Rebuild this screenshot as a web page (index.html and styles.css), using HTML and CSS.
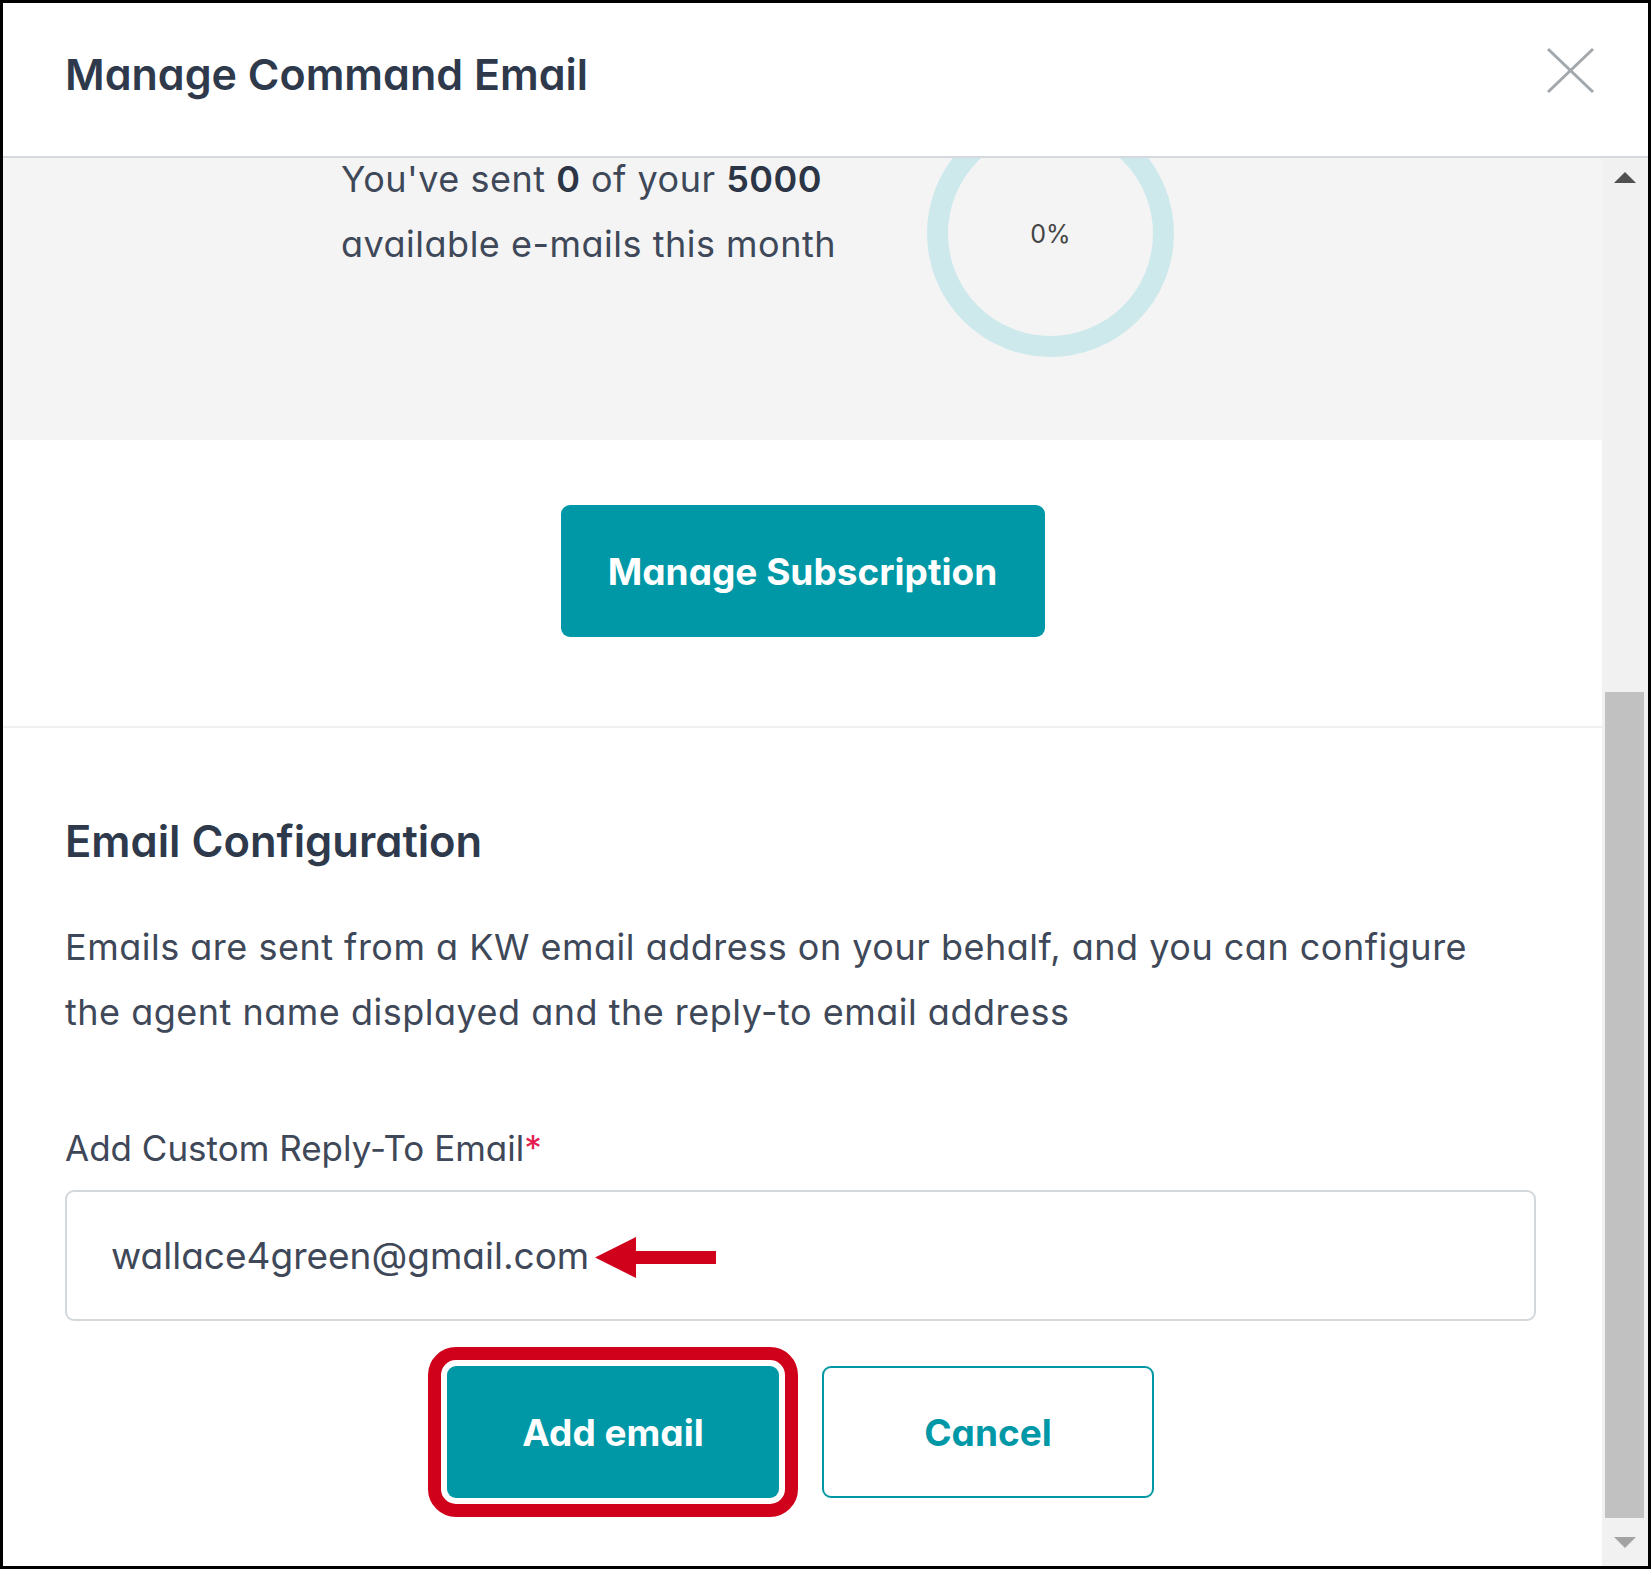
FILE: index.html
```html
<!DOCTYPE html>
<html>
<head>
    <meta charset="UTF-8">
    <title>Manage Command Email</title>
    <link rel="stylesheet" href="styles.css">
</head>
<body>

    <div class="modal">

        <div class="modal-header">
            <h1 class="modal-title">Manage Command Email</h1>
            <button class="close-btn" aria-label="Close">
                <svg width="49" height="47" viewBox="0 0 49 47">
                    <line x1="2" y1="2" x2="47" y2="45" stroke="#a3a8ad" stroke-width="3"/>
                    <line x1="47" y1="2" x2="2" y2="45" stroke="#a3a8ad" stroke-width="3"/>
                </svg>
            </button>
        </div>

        <div class="modal-body">
            <div class="content">

                <div class="usage">
                    <p class="usage-text">You've sent <b>0</b> of your <b>5000</b> available e-mails this month</p>
                    <div class="usage-ring">0%</div>
                </div>

                <div class="subscription">
                    <button class="btn btn-primary btn-wide">Manage Subscription</button>
                </div>

                <div class="config">
                    <h2 class="config-title">Email Configuration</h2>
                    <p class="config-text">Emails are sent from a KW email address on your behalf, and you can configure the agent name displayed and the reply-to email address</p>

                    <label class="field-label" for="replyTo">Add Custom Reply-To Email<span class="required">*</span></label>
                    <div class="field">
                        <input type="text" id="replyTo" class="field-input" value="wallace4green@gmail.com">
                        <!-- annotation arrow -->
                        <svg class="note-arrow" width="121" height="41" viewBox="0 0 121 41">
                            <polygon points="0,20.5 41,0 41,41" fill="#d0021b"/>
                            <rect x="40" y="14" width="81" height="13" fill="#d0021b"/>
                        </svg>
                    </div>

                    <div class="actions">
                        <button class="btn btn-primary btn-action highlighted">Add email</button>
                        <button class="btn btn-outline btn-action">Cancel</button>
                    </div>
                </div>

            </div>

            <div class="scrollbar">
                <div class="sb-btn sb-up"><span class="tri-up"></span></div>
                <div class="sb-track"><div class="sb-thumb"></div></div>
                <div class="sb-btn sb-down"><span class="tri-down"></span></div>
            </div>
        </div>

    </div>

</body>
</html>
```

FILE: styles.css
```css
* {
    box-sizing: border-box;
}

body {
    margin: 0;
    font-family: "Inter", "Lato", "Liberation Sans", sans-serif;
    font-feature-settings: "cv11";
    color: #3e4858;
    background: #fff;
}

.modal {
    height: 100vh;
    border: 3px solid #000;
    display: flex;
    flex-direction: column;
    overflow: hidden;
}

/* header */

.modal-header {
    height: 155px;
    flex-shrink: 0;
    display: flex;
    justify-content: space-between;
    align-items: flex-start;
    padding: 44px 53px 0 62px;
    border-bottom: 2px solid #d3d9de;
}

.modal-title {
    margin: 0;
    font-size: 43px;
    line-height: 55px;
    font-weight: 600;
    color: #2e3a4c;
}

.close-btn {
    border: none;
    background: none;
    padding: 0;
    cursor: pointer;
}

/* body */

.modal-body {
    flex: 1;
    display: flex;
    min-height: 0;
}

.content {
    flex: 1;
    overflow: hidden;
}

.usage {
    height: 330px;
    margin-top: -48px;
    background: #f4f4f4;
    display: flex;
    align-items: flex-start;
    padding-left: 338px;
}

.usage-text {
    width: 586px;
    margin: 37px 0 0;
    font-size: 36px;
    line-height: 65px;
    letter-spacing: 0.5px;
    padding-right: 40px;
}

.usage-text b {
    font-weight: 600;
    color: #2b3546;
}

.usage-ring {
    width: 247px;
    height: 247px;
    border-radius: 50%;
    border: 21px solid #cde9ec;
    display: flex;
    align-items: center;
    justify-content: center;
    font-size: 25px;
    color: #454545;
}

.subscription {
    display: flex;
    justify-content: center;
    padding: 65px 0 89px;
    border-bottom: 2px solid #f0f0f0;
}

.btn {
    font-family: "Inter", "Lato", "Liberation Sans", sans-serif;
    font-feature-settings: "cv11";
    font-weight: 700;
    font-size: 37px;
    border-radius: 9px;
    cursor: pointer;
}

.btn-primary {
    background: #0098a6;
    color: #fff;
    border: none;
}

.btn-outline {
    background: #fff;
    color: #0098a6;
    border: 2px solid #0098a6;
}

.btn-wide {
    width: 484px;
    height: 132px;
}

.config {
    padding: 87px 66px 0 62px;
}

.config-title {
    margin: 0;
    font-size: 43.5px;
    line-height: 52px;
    font-weight: 600;
    color: #2e3a4c;
}

.config-text {
    max-width: 1450px;
    margin: 48px 0 0;
    font-size: 36px;
    line-height: 65px;
    letter-spacing: 0.5px;
}

.field-label {
    display: block;
    margin-top: 81px;
    font-size: 35px;
    line-height: 44px;
}

.required {
    color: #e31d4e;
}

.field {
    position: relative;
    margin-top: 20px;
}

.field-input {
    display: block;
    width: 100%;
    height: 131px;
    border: 2px solid #d3d8dd;
    border-radius: 9px;
    padding: 0 44px;
    font-family: "Inter", "Lato", "Liberation Sans", sans-serif;
    font-feature-settings: "cv11";
    font-size: 37px;
    color: #3e4858;
    background: #fff;
}

.note-arrow {
    position: absolute;
    left: 530px;
    top: 47px;
}

.actions {
    display: flex;
    justify-content: center;
    gap: 43px;
    margin-top: 45px;
}

.btn-action {
    width: 332px;
    height: 132px;
}

.highlighted {
    outline: 13px solid #d0021b;
    outline-offset: 6px;
}

/* scrollbar */

.scrollbar {
    width: 46px;
    flex-shrink: 0;
    background: #f1f1f1;
    display: flex;
    flex-direction: column;
}

.sb-btn {
    display: flex;
    justify-content: center;
    align-items: center;
}

.sb-up {
    height: 38px;
}

.sb-down {
    height: 48px;
}

.tri-up {
    width: 0;
    height: 0;
    border-left: 11px solid transparent;
    border-right: 11px solid transparent;
    border-bottom: 11px solid #505050;
}

.tri-down {
    width: 0;
    height: 0;
    border-left: 11px solid transparent;
    border-right: 11px solid transparent;
    border-top: 11px solid #a3a3a3;
}

.sb-track {
    flex: 1;
    display: flex;
    flex-direction: column;
    justify-content: flex-end;
}

.sb-thumb {
    height: 826px;
    margin: 0 4px 0 3px;
    background: #c1c1c1;
}
```
